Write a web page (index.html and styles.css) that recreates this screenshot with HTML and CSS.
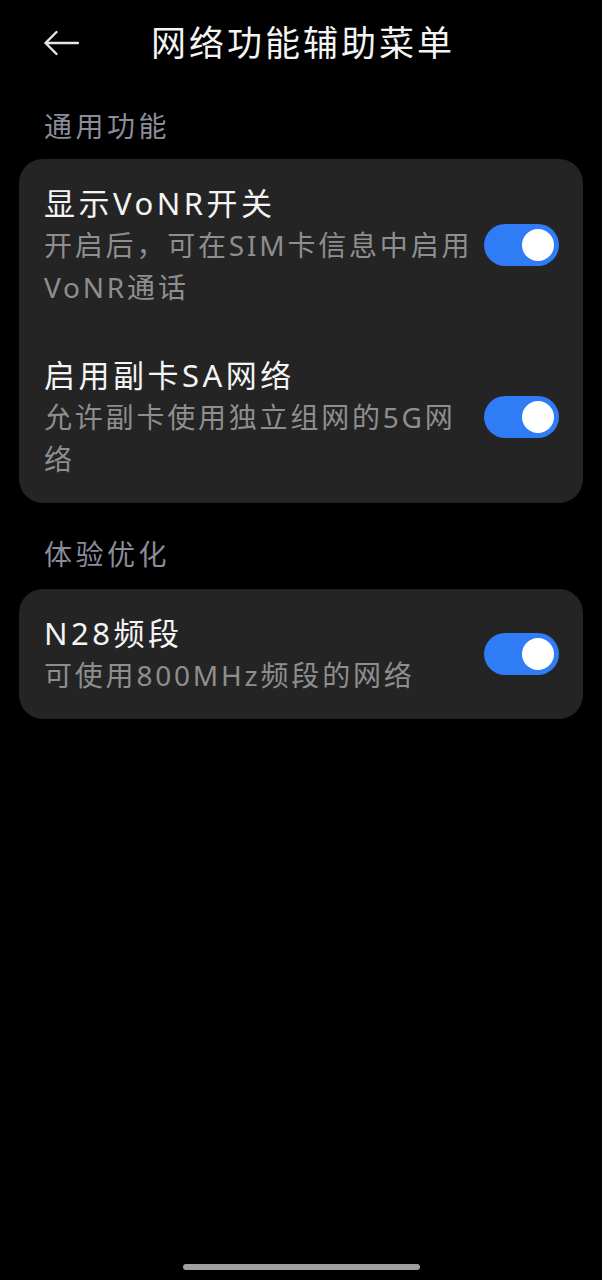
FILE: index.html
```html
<!DOCTYPE html>
<html lang="zh-CN">
<head>
<meta charset="utf-8">
<title>网络功能辅助菜单</title>
<link rel="stylesheet" href="styles.css">
</head>
<body>
<div class="screen">
  <header class="header">
    <svg class="back" viewBox="0 0 36 26" width="36" height="26" aria-hidden="true">
      <path d="M35 13 H2.5 M13.5 2 L2.5 13 L13.5 24" fill="none" stroke="#e6e6e6" stroke-width="2.4" stroke-linecap="round" stroke-linejoin="round"/>
    </svg>
    <h1 class="title">网络功能辅助菜单</h1>
  </header>

  <section class="section">
    <div class="section-label">通用功能</div>
    <div class="card">
      <div class="item">
        <div class="text">
          <div class="item-title">显示VoNR开关</div>
          <div class="item-sub">开启后，可在SIM卡信息中启用VoNR通话</div>
        </div>
        <div class="switch on"><span class="knob"></span></div>
      </div>
      <div class="item">
        <div class="text">
          <div class="item-title">启用副卡SA网络</div>
          <div class="item-sub">允许副卡使用独立组网的5G网络</div>
        </div>
        <div class="switch on"><span class="knob"></span></div>
      </div>
    </div>
  </section>

  <section class="section">
    <div class="section-label">体验优化</div>
    <div class="card">
      <div class="item">
        <div class="text">
          <div class="item-title">N28频段</div>
          <div class="item-sub">可使用800MHz频段的网络</div>
        </div>
        <div class="switch on"><span class="knob"></span></div>
      </div>
    </div>
  </section>

  <div class="home-bar"></div>
</div>
</body>
</html>
```

FILE: styles.css
```css
* { box-sizing: border-box; }

html, body {
  margin: 0;
  padding: 0;
  background: #000;
}

body {
  font-family: "Noto Sans", "Noto Sans CJK SC", sans-serif;
  color: #f2f2f2;
}

.screen {
  width: 602px;
  min-height: 1280px;
  background: #000;
}

.header {
  height: 86px;
  display: flex;
  align-items: center;
  padding-left: 43px;
}

.back {
  display: block;
  flex: none;
}

.title {
  margin: 0 0 0 72px;
  font-size: 35px;
  font-weight: 400;
  letter-spacing: 3px;
  line-height: 42px;
  color: #f4f4f4;
}

.section {
  padding: 0 19px;
}

.section-label {
  padding: 19px 0 0 25px;
  font-size: 28px;
  line-height: 42px;
  letter-spacing: 3.5px;
  color: #8a8c9a;
  margin-bottom: 12px;
}

.section + .section .section-label {
  padding-top: 30px;
  margin-bottom: 14px;
}

.card {
  background: #242424;
  border-radius: 24px;
}

.item {
  display: flex;
  align-items: center;
  padding: 23px 24px 23px 25px;
}

.text {
  flex: 1;
  min-width: 0;
}

.item-title {
  font-size: 31px;
  line-height: 42px;
  letter-spacing: 3.5px;
  color: #f4f4f4;
}

.item-sub {
  font-size: 28px;
  line-height: 42px;
  letter-spacing: 2.8px;
  color: #8e8e8e;
}

.switch {
  flex: none;
  width: 75px;
  height: 42px;
  border-radius: 21px;
  background: #2f7cf6;
  display: flex;
  align-items: center;
  justify-content: flex-end;
  padding-right: 5px;
}

.knob {
  width: 32px;
  height: 32px;
  border-radius: 50%;
  background: #fff;
}

.home-bar {
  position: fixed;
  left: 183px;
  bottom: 10px;
  width: 237px;
  height: 6px;
  border-radius: 3px;
  background: #a0a0a0;
}
```
